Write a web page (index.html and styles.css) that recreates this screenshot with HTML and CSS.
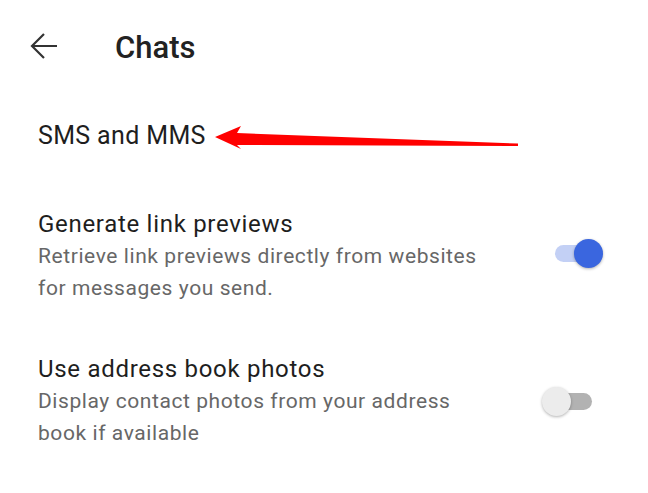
FILE: index.html
```html
<!DOCTYPE html>
<html lang="en">
<head>
    <meta charset="utf-8">
    <link rel="stylesheet" href="styles.css">
</head>
<body>
    <div class="screen">
        <div class="toolbar">
            <svg class="back" width="28" height="28" viewBox="0 0 28 28">
                <path d="M27 14H2M14 2L2 14l12 12" fill="none" stroke="#333" stroke-width="2.2"/>
            </svg>
            <h1 class="title">Chats</h1>
        </div>

        <div class="link-row">SMS and MMS</div>

        <div class="item first">
            <div class="text">
                <div class="label">Generate link previews</div>
                <div class="summary">Retrieve link previews directly from websites for messages you send.</div>
            </div>
            <div class="switch on"><span class="track"></span><span class="thumb"></span></div>
        </div>

        <div class="item">
            <div class="text">
                <div class="label">Use address book photos</div>
                <div class="summary">Display contact photos from your address book if available</div>
            </div>
            <div class="switch"><span class="track"></span><span class="thumb"></span></div>
        </div>

        <svg class="pointer" width="310" height="30" viewBox="0 0 310 30">
            <polygon points="3,15 29,4 25,11 306,21.5 306,24 25,23 29,27" fill="#ff0000"/>
        </svg>
    </div>
</body>
</html>
```

FILE: styles.css
```css
html, body {
    margin: 0;
    padding: 0;
    background: #fff;
    font-family: Roboto, "Noto Sans", Arial, sans-serif;
}

.screen {
    position: relative;
    width: 648px;
    height: 493px;
    overflow: hidden;
}

.toolbar {
    display: flex;
    align-items: center;
    height: 40px;
    padding: 28px 0 0 30px;
}

.toolbar .back {
    display: block;
    margin-top: -4px;
}

.toolbar .title {
    margin: 0 0 0 57px;
    font-size: 31px;
    font-weight: 500;
    line-height: 40px;
    color: #222;
}

.link-row {
    margin-top: 52px;
    padding-left: 38px;
    font-size: 25px;
    line-height: 32px;
    letter-spacing: 0.35px;
    color: #1e1e1e;
}

.item {
    display: flex;
    align-items: center;
    padding: 0 44px 0 38px;
    margin-top: 49px;
}

.item.first {
    margin-top: 56px;
}

.item .text {
    width: 452px;
}

.item .label {
    font-size: 24px;
    line-height: 32px;
    letter-spacing: 0.7px;
    color: #1e1e1e;
}

.item .summary {
    font-size: 21px;
    line-height: 32px;
    letter-spacing: 0.58px;
    color: #676767;
}

.switch {
    position: relative;
    width: 62px;
    height: 31px;
    margin-left: auto;
}

.switch.on {
    margin-bottom: 6px;
}

.switch .track {
    position: absolute;
    left: 13px;
    right: 12px;
    top: 7px;
    height: 17px;
    border-radius: 9px;
    background: #b2b2b2;
}

.switch .thumb {
    position: absolute;
    left: 0;
    top: 1px;
    width: 29px;
    height: 29px;
    border-radius: 50%;
    background: #ececec;
    box-shadow: 0 1px 3px rgba(0, 0, 0, 0.3);
}

.switch.on .track {
    background: #c3d0f5;
}

.switch.on .thumb {
    left: auto;
    right: 1px;
    background: #3a66df;
}

.pointer {
    position: absolute;
    left: 212px;
    top: 122px;
}
```
